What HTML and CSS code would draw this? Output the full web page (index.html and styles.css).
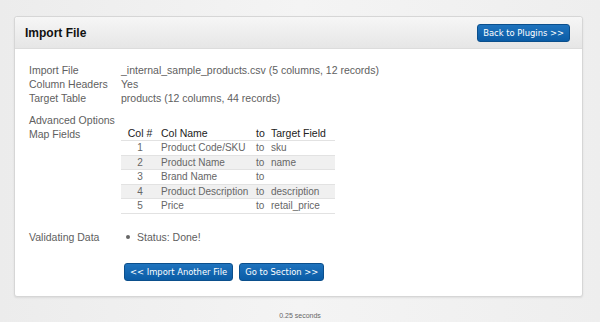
FILE: index.html
```html
<!DOCTYPE html>
<html lang="en">
<head>
    <meta charset="UTF-8">
    <title>Import File</title>
    <link rel="stylesheet" href="styles.css">
</head>
<body>
    <div class="panel">
        <div class="panel-head">
            <h2>Import File</h2>
            <a class="btn" href="#">Back to Plugins &gt;&gt;</a>
        </div>
        <div class="panel-body">
            <div class="info">
                <span class="label">Import File</span>
                <span>_internal_sample_products.csv (5 columns, 12 records)</span>
                <span class="label">Column Headers</span>
                <span>Yes</span>
                <span class="label">Target Table</span>
                <span>products (12 columns, 44 records)</span>
            </div>

            <div class="info options">
                <span class="label">Advanced Options</span>
                <span></span>
                <span class="label">Map Fields</span>
                <table class="map">
                    <thead>
                        <tr><th class="num">Col #</th><th>Col Name</th><th>to</th><th>Target Field</th></tr>
                    </thead>
                    <tbody>
                        <tr><td class="num">1</td><td>Product Code/SKU</td><td>to</td><td>sku</td></tr>
                        <tr><td class="num">2</td><td>Product Name</td><td>to</td><td>name</td></tr>
                        <tr><td class="num">3</td><td>Brand Name</td><td>to</td><td></td></tr>
                        <tr><td class="num">4</td><td>Product Description</td><td>to</td><td>description</td></tr>
                        <tr><td class="num">5</td><td>Price</td><td>to</td><td>retail_price</td></tr>
                    </tbody>
                </table>
            </div>

            <div class="info validating">
                <span class="label">Validating Data</span>
                <span class="status">Status: Done!</span>
            </div>

            <div class="actions">
                <a class="btn" href="#">&lt;&lt; Import Another File</a>
                <a class="btn" href="#">Go to Section &gt;&gt;</a>
            </div>
        </div>
    </div>
    <p class="timer">0.25 seconds</p>
</body>
</html>
```

FILE: styles.css
```css
body {
    margin: 0;
    background: linear-gradient(90deg, #ececec, #f4f4f4 50%, #eeeeee);
    font-family: "Liberation Sans", Arial, sans-serif;
    font-size: 10.5px;
    color: #606060;
}
.panel {
    width: 567px;
    margin: 16px 0 0 14px;
    background: #ffffff;
    border: 1px solid #d6d6d6;
    border-radius: 3px;
    box-shadow: 0 1px 2px rgba(0, 0, 0, 0.08);
}
.panel-head {
    height: 31px;
    display: flex;
    align-items: center;
    justify-content: space-between;
    padding: 0 12px 0 10px;
    background: linear-gradient(#f6f6f6, #e6e6e6);
    border-bottom: 1px solid #dcdcdc;
    border-radius: 3px 3px 0 0;
}
.panel-head h2 {
    margin: 0;
    font-size: 12px;
    font-weight: bold;
    color: #111111;
}
.btn {
    display: inline-block;
    height: 16px;
    line-height: 16px;
    padding: 0 5px;
    white-space: nowrap;
    font-family: Verdana, "DejaVu Sans", sans-serif;
    font-size: 8.4px;
    color: #ffffff;
    text-decoration: none;
    text-align: center;
    background: linear-gradient(#1f73bd, #0a5ca6);
    border: 1px solid #0b4f8c;
    border-radius: 3px;
}
.panel-body {
    padding: 14px 14px 15px 14px;
}
.info {
    display: grid;
    grid-template-columns: 92px auto;
    line-height: 14px;
}
.options {
    margin-top: 8px;
}
.map {
    border-collapse: collapse;
    table-layout: fixed;
    width: 214px;
    margin-top: -1px;
    white-space: nowrap;
    font-size: 10px;
}
.map th {
    text-align: left;
    font-weight: normal;
    font-size: 10.5px;
    color: #222222;
    padding: 0 2px;
    height: 14px;
}
.map td {
    padding: 0 2px;
    height: 13.6px;
    line-height: 13.6px;
    border-top: 1px solid #e2e2e2;
    color: #666666;
}
.map tbody tr:last-child td {
    border-bottom: 1px solid #e2e2e2;
}
.map tbody tr:nth-child(even) td {
    background: #f0f0f0;
}
.map th.num {
    width: 34px;
    text-align: center;
}
.map td.num {
    text-align: center;
}
.map th:nth-child(2) {
    width: 91px;
}
.map th:nth-child(3) {
    width: 11px;
}
.validating {
    margin-top: 16px;
}
.status {
    position: relative;
    padding-left: 16px;
}
.status::before {
    content: "";
    position: absolute;
    left: 5px;
    top: 5px;
    width: 4px;
    height: 4px;
    border-radius: 50%;
    background: #666666;
}
.actions {
    display: flex;
    gap: 6px;
    margin-top: 19px;
    padding-left: 95px;
}
.timer {
    margin: 14px 0 0 0;
    line-height: 10px;
    text-align: center;
    font-size: 7px;
    color: #666666;
}
```
